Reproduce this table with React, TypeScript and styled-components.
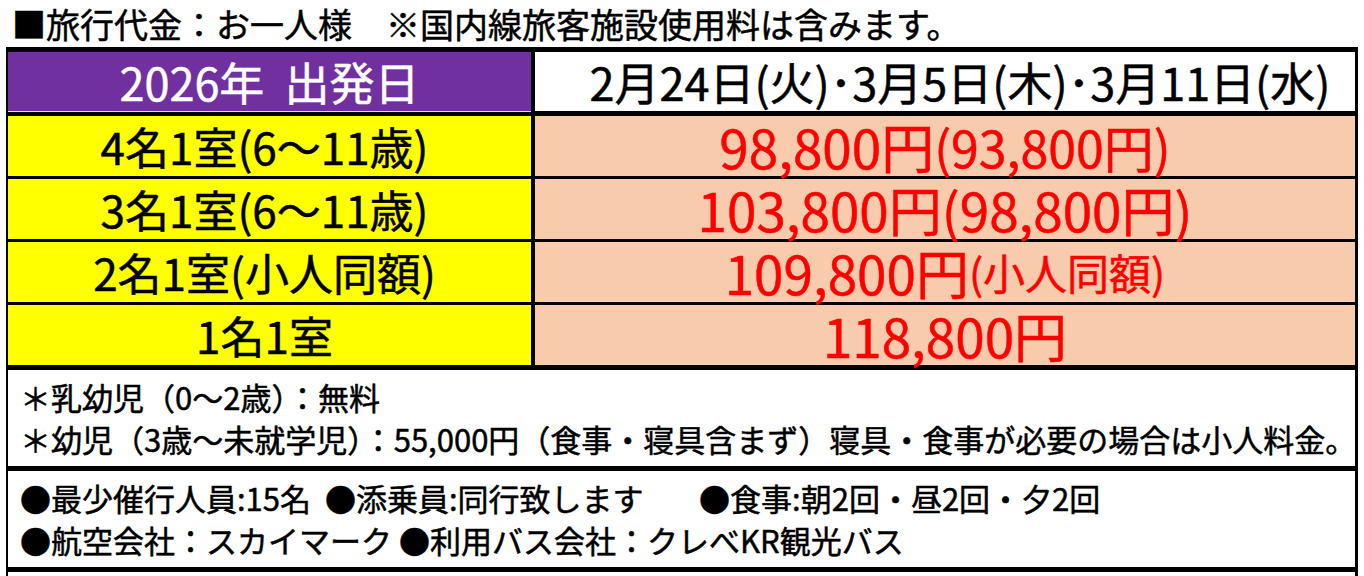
import React from 'react';
import styled, { createGlobalStyle } from 'styled-components';

const GlobalStyle = createGlobalStyle`
  html, body {
    margin: 0;
    padding: 0;
    background: #ffffff;
  }
  body {
    font-family: 'Noto Sans CJK JP', 'Noto Sans', sans-serif;
    color: #000000;
    -webkit-text-stroke: 0.5px currentColor;
  }
`;

type PriceRow = {
  label: string;
  price: string;
  note?: string;
  noteSize?: number;
};

const rows: PriceRow[] = [
  { label: '4名1室(6～11歳)', price: '98,800円', note: '(93,800円)', noteSize: 50 },
  { label: '3名1室(6～11歳)', price: '103,800円', note: '(98,800円)', noteSize: 53 },
  { label: '2名1室(小人同額)', price: '109,800円', note: '(小人同額)', noteSize: 42 },
  { label: '1名1室', price: '118,800円' },
];

const App = () => {
  return (
    <>
      <GlobalStyle />
      <Page>
        <Title>■旅行代金：お一人様　※国内線旅客施設使用料は含みます。</Title>
        <Table>
          <HeaderRow>
            <YearCell>2026年&nbsp;&nbsp;出発日</YearCell>
            <DateCell>2月24日(火)･3月5日(木)･3月11日(水)</DateCell>
          </HeaderRow>
          <Rows>
            {rows.map((row) => (
              <Row key={row.label}>
                <LabelCell>{row.label}</LabelCell>
                <PriceCell>
                  {row.price}
                  {row.note && <Note $size={row.noteSize}>{row.note}</Note>}
                </PriceCell>
              </Row>
            ))}
          </Rows>
          <NoteBox>
            <NoteLine>＊乳幼児（0～2歳）：無料</NoteLine>
            <NoteLine>
              ＊幼児（3歳～未就学児）：55,000円（食事・寝具含まず）寝具・食事が必要の場合は小人料金。
            </NoteLine>
          </NoteBox>
          <NoteBox>
            <NoteLine>
              {'●最少催行人員:15名  ●添乗員:同行致します        ●食事:朝2回・昼2回・夕2回'}
            </NoteLine>
            <NoteLine>●航空会社：スカイマーク ●利用バス会社：クレべKR観光バス</NoteLine>
          </NoteBox>
          <Tail />
        </Table>
      </Page>
    </>
  );
};

export default App;

const Page = styled.div`
  width: 1364px;
  height: 576px;
  overflow: hidden;
  padding-left: 6px;
  box-sizing: border-box;
`;

const Title = styled.h1`
  margin: 0;
  height: 47px;
  box-sizing: border-box;
  padding: 2px 0 0 6px;
  font-size: 34px;
  font-weight: 400;
  line-height: 43px;
  white-space: nowrap;
`;

const Table = styled.div`
  width: 1352px;
  box-sizing: border-box;
  background: #000000;
  padding: 5px 3px 0 2px;
  display: flex;
  flex-direction: column;
`;

const Grid = styled.div`
  display: grid;
  grid-template-columns: 523px 1fr;
  grid-template-rows: 100%;
  column-gap: 4px;
`;

const HeaderRow = styled(Grid)`
  height: 60px;
  margin-bottom: 4px;
`;

const Cell = styled.div`
  display: flex;
  align-items: center;
  justify-content: center;
  line-height: 1;
  white-space: nowrap;
`;

const YearCell = styled(Cell)`
  background: #7030a0;
  border-bottom: 1px solid #ffff00;
  color: #ffffff;
  font-size: 45px;
`;

const DateCell = styled(Cell)`
  background: #ffffff;
  border-bottom: 1px solid #000000;
  font-size: 45px;
  padding-left: 30px;
`;

const Rows = styled.div`
  display: flex;
  flex-direction: column;
  gap: 3px;
  margin-bottom: 5px;
`;

const Row = styled(Grid)`
  height: 60px;
`;

const LabelCell = styled(Cell)`
  background: #ffff00;
  font-size: 44px;
  padding-right: 10px;
`;

const PriceCell = styled(Cell)`
  background: #f8cbad;
  color: #ff0000;
  font-size: 53px;
`;

const Note = styled.span<{ $size?: number }>`
  font-size: ${({ $size }) => $size ?? 53}px;
`;

const NoteBox = styled.div`
  background: #ffffff;
  height: 96px;
  margin-bottom: 5px;
  padding-left: 12px;
  display: flex;
  flex-direction: column;
  justify-content: center;
  gap: 2px;
`;

const NoteLine = styled.div`
  font-size: 31px;
  line-height: 40px;
  white-space: pre;
`;

const Tail = styled.div`
  background: #ffffff;
  height: 20px;
`;
